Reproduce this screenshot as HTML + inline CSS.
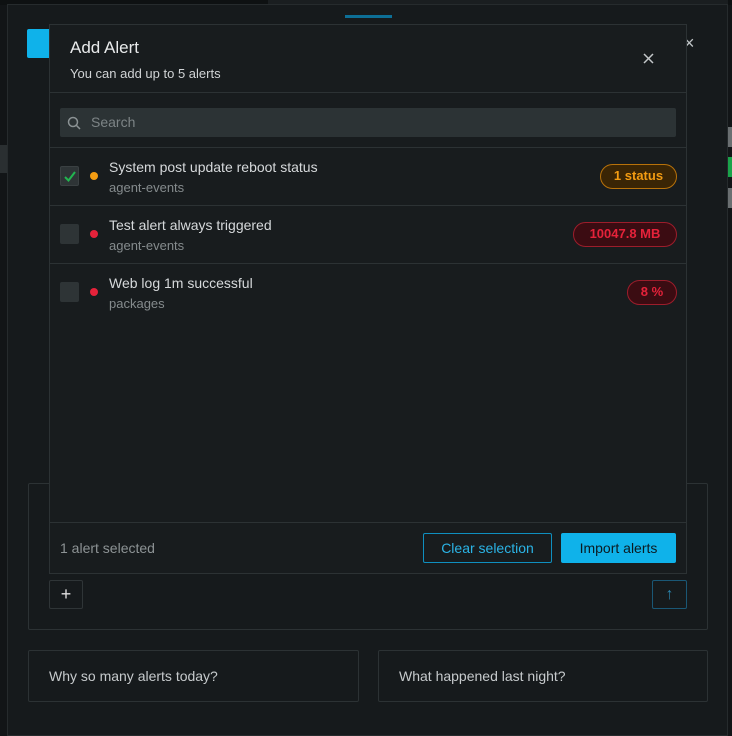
<!DOCTYPE html>
<html><head><style>
*{box-sizing:border-box;margin:0;padding:0}
body{width:732px;height:736px;background:#121517;font-family:"Liberation Sans",sans-serif;position:relative;overflow:hidden;color:#d4d7d9}
.a{position:absolute}
</style></head><body>
<div class="a" style="left:0;top:0;width:732px;height:5px;background:#0e1112"></div>
<div class="a" style="left:268px;top:0;width:460px;height:4px;background:#1a1e20"></div>
<div class="a" style="left:0;top:145px;width:7px;height:28px;background:#2a2f31"></div>
<div class="a" style="left:7px;top:4px;width:721px;height:732px;background:#161a1c;border:1px solid #262b2d"></div>
<div class="a" style="left:345px;top:15px;width:47px;height:3px;background:#0d6f96"></div>
<div class="a" style="left:27px;top:29px;width:24px;height:29px;background:#0fb2ea;border-radius:2px"></div>
<div class="a" style="left:684px;top:33px;font-size:18px;color:#bfc4c6">×</div>
<div class="a" style="left:728px;top:127px;width:4px;height:20px;background:#6a6f71"></div>
<div class="a" style="left:728px;top:157px;width:4px;height:20px;background:#1aa34a"></div>
<div class="a" style="left:728px;top:188px;width:4px;height:20px;background:#6a6f71"></div>

<div class="a" style="left:28px;top:483px;width:680px;height:147px;border:1px solid #2c3234;border-radius:2px"></div>
<div class="a" style="left:49px;top:580px;width:34px;height:29px;border:1px solid #2f3537;border-radius:2px;text-align:center;font-size:18px;line-height:26px;color:#e0e0e0">+</div>
<div class="a" style="left:652px;top:580px;width:35px;height:29px;border:1px solid #1a5775;border-radius:2px;text-align:center;font-size:16px;line-height:27px;color:#2a84ad">↑</div>
<div class="a" style="left:28px;top:650px;width:331px;height:52px;border:1px solid #2c3234;border-radius:2px;padding:17px 20px;font-size:14px;color:#c6cacc">Why so many alerts today?</div>
<div class="a" style="left:378px;top:650px;width:330px;height:52px;border:1px solid #2c3234;border-radius:2px;padding:17px 20px;font-size:14px;color:#c6cacc">What happened last night?</div>

<div class="a" style="left:49px;top:24px;width:638px;height:550px;background:#181c1e;border:1px solid #2c3234">
 <div class="a" style="left:20px;top:13px;font-size:17px;color:#e8eaeb">Add Alert</div>
 <div class="a" style="left:20px;top:41px;font-size:13px;color:#d0d3d5">You can add up to 5 alerts</div>
 <svg class="a" style="left:593px;top:28px" width="11" height="11" viewBox="0 0 11 11"><path d="M1 1L10 10M10 1L1 10" stroke="#c4c8ca" stroke-width="1.5"/></svg>
 <div class="a" style="left:0;top:67px;width:636px;height:1px;background:#2c3234"></div>
 <div class="a" style="left:10px;top:83px;width:616px;height:29px;background:#2c3335;border-radius:2px">
  <svg class="a" style="left:7px;top:8px" width="14" height="14" viewBox="0 0 14 14"><circle cx="6" cy="6" r="4.5" fill="none" stroke="#8b9294" stroke-width="1.5"/><path d="M9.5 9.5L13 13" stroke="#8b9294" stroke-width="1.5"/></svg>
  <div class="a" style="left:31px;top:6px;font-size:14px;color:#7d8486">Search</div>
 </div>
 <div class="a" style="left:0;top:122px;width:636px;height:1px;background:#2c3234"></div>
 <div class="a" style="left:10px;top:141px;width:19px;height:20px;background:#2e3436;border:1px solid #3a4042;border-radius:2px"><svg class="a" style="left:3px;top:4px" width="12" height="11" viewBox="0 0 12 11"><path d="M1 6L4.5 9.5L11 1" fill="none" stroke="#22b550" stroke-width="2"/></svg></div>
 <div class="a" style="left:40px;top:147px;width:8px;height:8px;border-radius:50%;background:#f39c12"></div>
 <div class="a" style="left:59px;top:134px;font-size:14px;color:#d6d9db">System post update reboot status</div>
 <div class="a" style="left:59px;top:155px;font-size:13px;color:#858b8d">agent-events</div>
 <div class="a" style="left:550px;top:139px;width:77px;height:25px;border:1.5px solid #b8720a;background:#3a2505;border-radius:13px;color:#f39c12;font-size:13px;font-weight:bold;text-align:center;line-height:22px">1 status</div>
 <div class="a" style="left:0;top:180px;width:636px;height:1px;background:#2c3234"></div>
 <div class="a" style="left:10px;top:199px;width:19px;height:20px;background:#2e3436;border-radius:2px"></div>
 <div class="a" style="left:40px;top:205px;width:8px;height:8px;border-radius:50%;background:#e5223a"></div>
 <div class="a" style="left:59px;top:192px;font-size:14px;color:#d6d9db">Test alert always triggered</div>
 <div class="a" style="left:59px;top:213px;font-size:13px;color:#858b8d">agent-events</div>
 <div class="a" style="left:523px;top:197px;width:104px;height:25px;border:1.5px solid #9d1d2b;background:#3b0c12;border-radius:13px;color:#e5223a;font-size:13px;font-weight:bold;text-align:center;line-height:22px">10047.8 MB</div>
 <div class="a" style="left:0;top:238px;width:636px;height:1px;background:#2c3234"></div>
 <div class="a" style="left:10px;top:257px;width:19px;height:20px;background:#2e3436;border-radius:2px"></div>
 <div class="a" style="left:40px;top:263px;width:8px;height:8px;border-radius:50%;background:#e5223a"></div>
 <div class="a" style="left:59px;top:250px;font-size:14px;color:#d6d9db">Web log 1m successful</div>
 <div class="a" style="left:59px;top:271px;font-size:13px;color:#858b8d">packages</div>
 <div class="a" style="left:577px;top:255px;width:50px;height:25px;border:1.5px solid #9d1d2b;background:#3b0c12;border-radius:13px;color:#e5223a;font-size:13px;font-weight:bold;text-align:center;line-height:22px">8 %</div>
 <div class="a" style="left:0;top:497px;width:636px;height:1px;background:#2c3234"></div>
 <div class="a" style="left:10px;top:515px;font-size:14px;color:#8d9395">1 alert selected</div>
 <div class="a" style="left:373px;top:508px;width:129px;height:30px;border:1.5px solid #0f8fbf;border-radius:2px;color:#2bb4e6;font-size:14px;text-align:center;line-height:28px">Clear selection</div>
 <div class="a" style="left:511px;top:508px;width:115px;height:30px;background:#0fb2ea;border-radius:2px;color:#0c1b22;font-size:14px;text-align:center;line-height:30px">Import alerts</div>
</div>
</body></html>
